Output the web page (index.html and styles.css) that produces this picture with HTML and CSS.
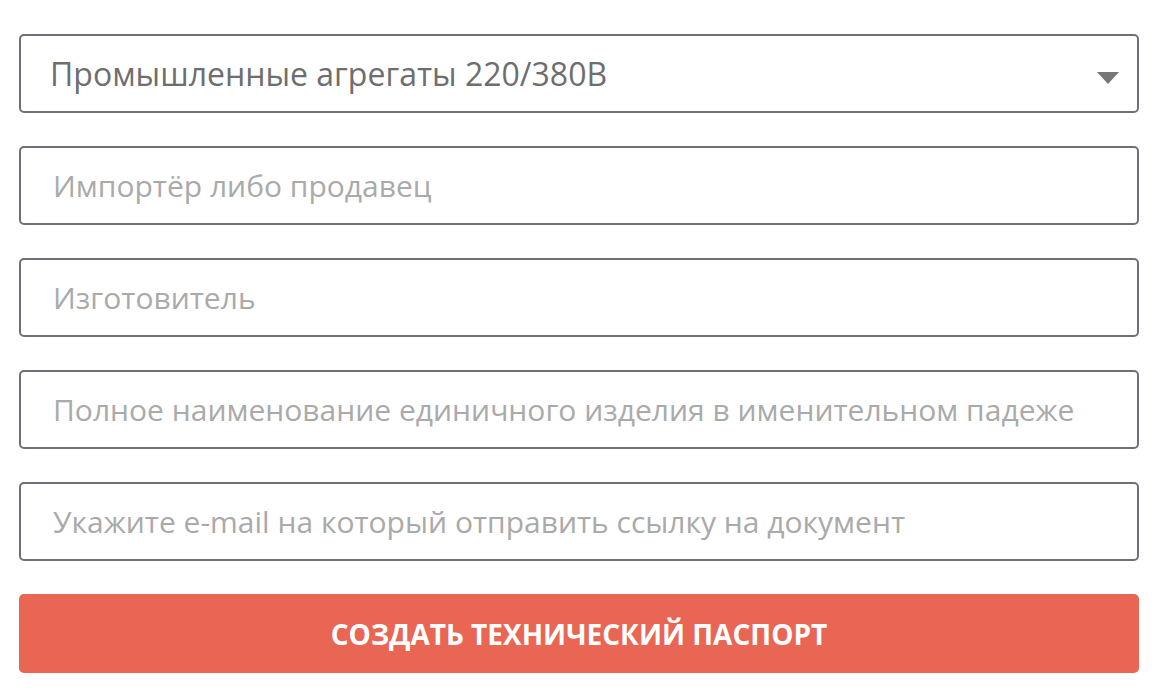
FILE: index.html
```html
<!DOCTYPE html>
<html lang="ru">
<head>
    <meta charset="UTF-8">
    <title>Технический паспорт</title>
    <link rel="stylesheet" href="styles.css">
</head>
<body>
    <form class="passport-form">
        <div class="select-wrap">
            <select class="field field-select">
                <option>Промышленные агрегаты 220/380В</option>
            </select>
            <span class="select-arrow"></span>
        </div>
        <input class="field" type="text" placeholder="Импортёр либо продавец">
        <input class="field" type="text" placeholder="Изготовитель">
        <input class="field" type="text" placeholder="Полное наименование единичного изделия в именительном падеже">
        <input class="field" type="email" placeholder="Укажите e-mail на который отправить ссылку на документ">
        <button class="submit-btn" type="button">Создать технический паспорт</button>
    </form>
</body>
</html>
```

FILE: styles.css
```css
body {
    margin: 0;
    padding: 34px 25px 0 19px;
    background-color: #fff;
    font-family: "Open Sans", sans-serif;
}
.passport-form {
    display: flex;
    flex-direction: column;
    gap: 33px;
    width: 1120px;
}
.field {
    box-sizing: border-box;
    width: 100%;
    height: 79px;
    padding: 0 32px;
    border: 2px solid #6c7079;
    border-radius: 5px;
    background: #fff;
    font-family: "Open Sans", sans-serif;
    font-size: 30px;
    color: #666;
    outline: none;
}
.field::placeholder {
    color: #aaa;
}
.select-wrap {
    position: relative;
}
.field-select {
    appearance: none;
    -webkit-appearance: none;
    padding-left: 29px;
    font-size: 32px;
    color: #6e6e6e;
}
.select-arrow {
    position: absolute;
    right: 20px;
    top: 38px;
    width: 0;
    height: 0;
    border-left: 11px solid transparent;
    border-right: 11px solid transparent;
    border-top: 12px solid #777;
}
.submit-btn {
    height: 79px;
    border: none;
    border-radius: 5px;
    background-color: #e96654;
    color: #fff;
    font-family: "Open Sans", sans-serif;
    font-size: 28px;
    font-weight: 700;
    text-transform: uppercase;
    cursor: pointer;
}
```
